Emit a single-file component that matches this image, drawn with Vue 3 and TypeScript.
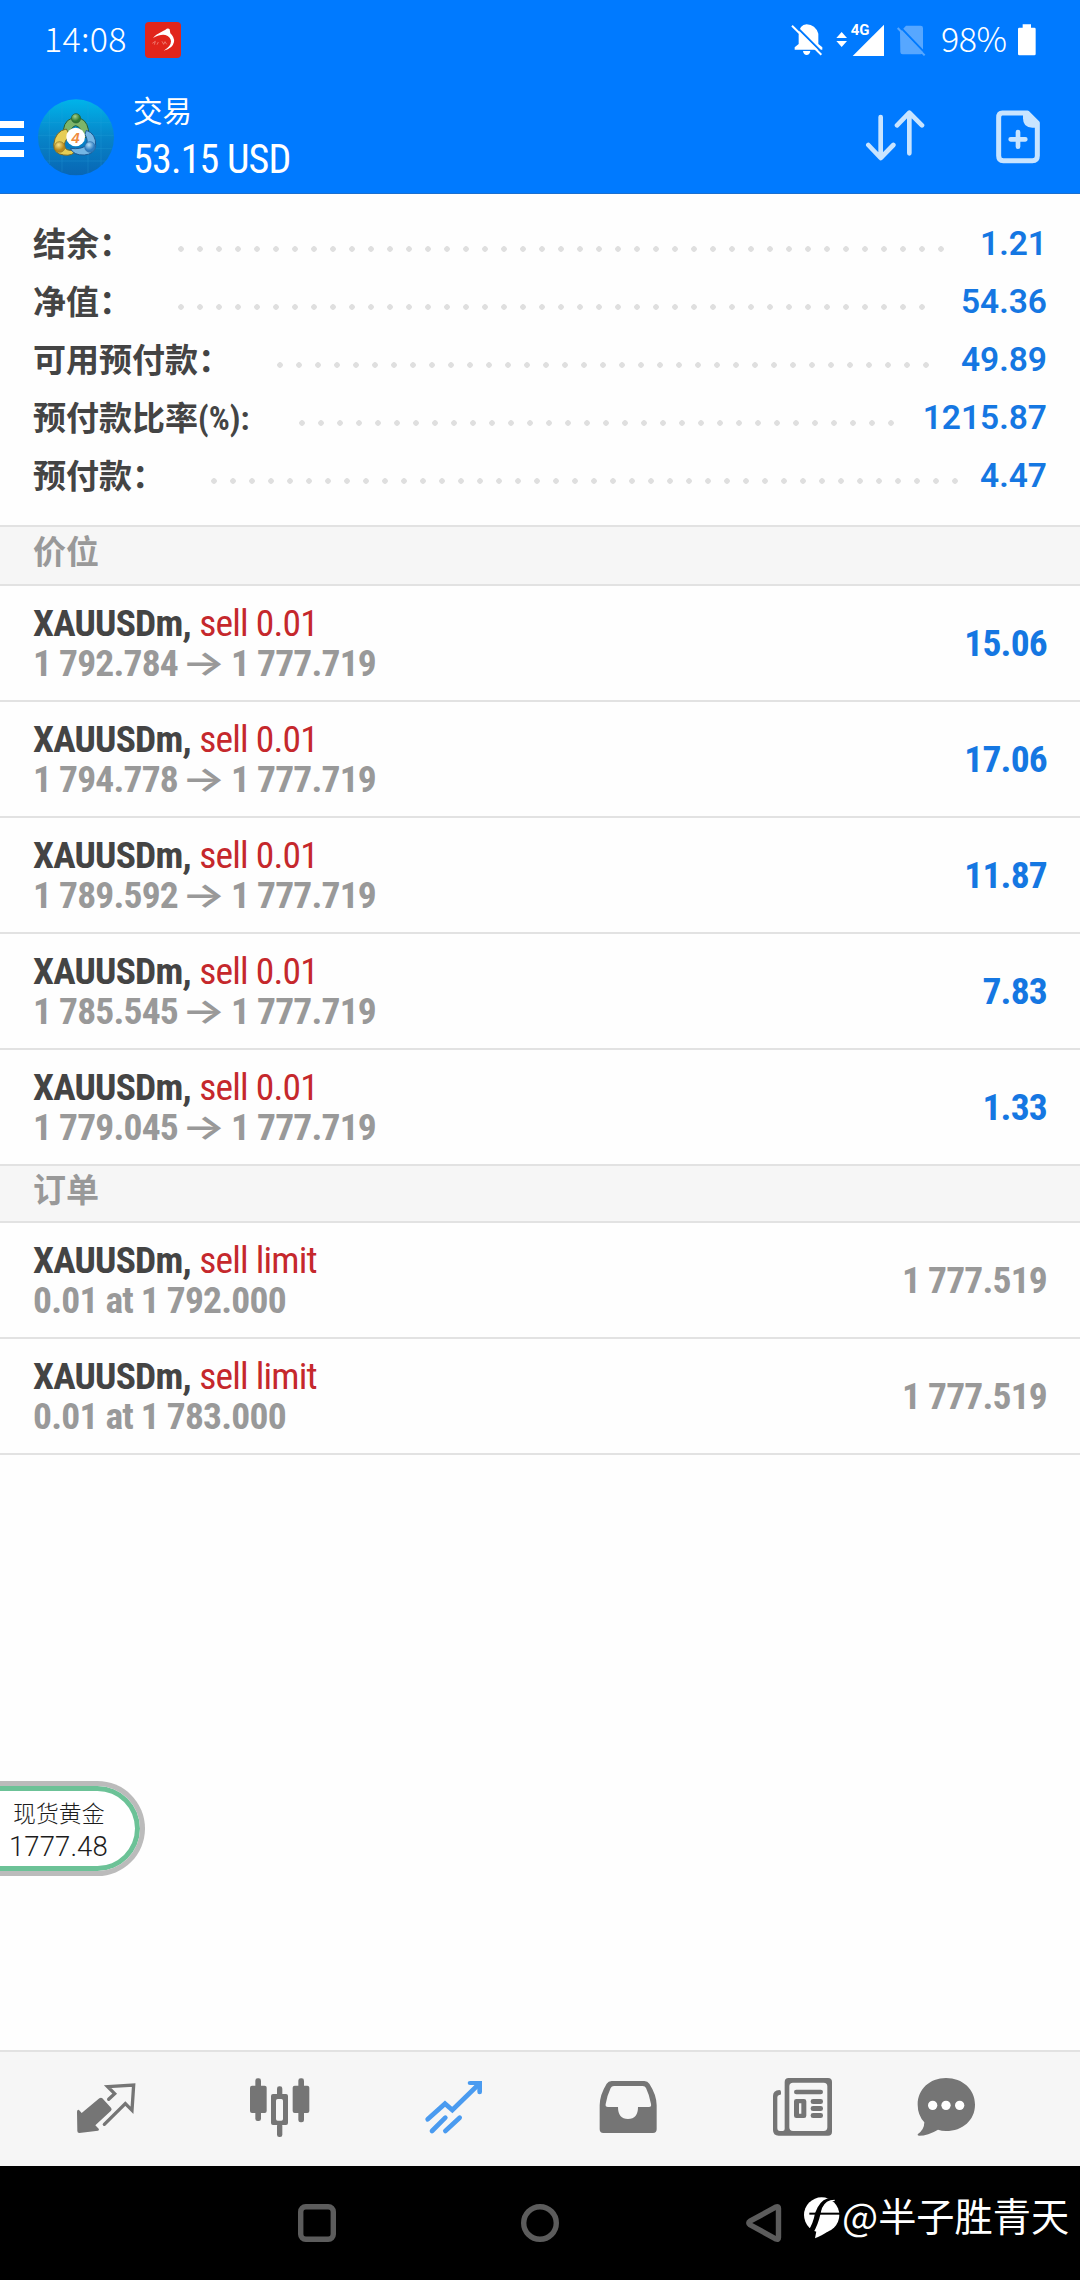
<script setup lang="ts">
interface Summary { label: string; value: string; dots: number; start: number }
interface Position { open: string; now: string; profit: string }
interface Order { detail: string; price: string }

const DOT_PITCH = 19

const summary: Summary[] = [
  { label: '结余：', value: '1.21', dots: 41, start: 178 },
  { label: '净值：', value: '54.36', dots: 40, start: 178 },
  { label: '可用预付款：', value: '49.89', dots: 35, start: 277 },
  { label: '预付款比率(%):', value: '1215.87', dots: 32, start: 299 },
  { label: '预付款：', value: '4.47', dots: 40, start: 211 },
]

const positions: Position[] = [
  { open: '1 792.784', now: '1 777.719', profit: '15.06' },
  { open: '1 794.778', now: '1 777.719', profit: '17.06' },
  { open: '1 789.592', now: '1 777.719', profit: '11.87' },
  { open: '1 785.545', now: '1 777.719', profit: '7.83' },
  { open: '1 779.045', now: '1 777.719', profit: '1.33' },
]

const orders: Order[] = [
  { detail: '0.01 at 1 792.000', price: '1 777.519' },
  { detail: '0.01 at 1 783.000', price: '1 777.519' },
]
</script>

<template>
  <div class="screen">
    <header class="top">
      <div class="status">
        <span class="clock">14:08</span>
        <svg class="notif" width="38" height="38" viewBox="432 63 114 114">
          <rect x="435" y="66" width="108" height="108" rx="12" fill="#e1251b" />
          <path d="M459 114C472 98 488 96 500 86q6-2 9 2l2 12q13 12 11 26-4 20-31 26 22-12 22-28-1-14-17-19-13-4-37 9z" fill="#fff" />
          <path d="M457 130l9-6-3 10M471 134l4-8M486 124l5 9 4-8 5 8" stroke="#f39a90" stroke-width="2" fill="none" />
        </svg>
        <svg class="sys" width="150" height="40" viewBox="90 60 450 120">
          <path d="M104 149v-7l12-10v-28q2-30 24-31 26 1 35 28v31l12 10v7z" fill="#fff" />
          <path d="M129 153h22q-2 12-11 12t-11-12z" fill="#fff" />
          <path d="M101 72l88 88" stroke="#007aff" stroke-width="6" />
          <path d="M96 77l88 87" stroke="#fff" stroke-width="6" />
          <path d="M229 114l16-18 16 18zM229 123h32l-16 18z" fill="#fff" />
          <path d="M372 74v94h-94z" fill="#fff" />
          <text x="272" y="105" class="net">4G</text>
          <path d="M420 97l18-20h44q7 0 7 7v72q0 7-7 7h-54q-7 0-7-7z" fill="#57a7ff" />
          <path d="M419 79l78 82" stroke="#007aff" stroke-width="6" />
          <path d="M413 84l81 82" stroke="#57a7ff" stroke-width="6" />
        </svg>
        <span class="pct">98%</span>
        <svg class="battery" width="18" height="32" viewBox="773 74 54 96">
          <path d="M787 75h25v10h10q4 0 4 4v75q0 4-4 4h-45q-4 0-4-4V89q0-4 4-4h10z" fill="#fff" />
        </svg>
      </div>
      <div class="bar">
        <div class="burger"><i /><i /><i /></div>
        <svg class="logo" width="78" height="78" viewBox="112 293 234 234">
          <defs>
            <linearGradient id="sky" x1="0" y1="0" x2="0" y2="1">
              <stop offset="0" stop-color="#00b4ea" /><stop offset=".5" stop-color="#0784c8" /><stop offset="1" stop-color="#0866b4" />
            </linearGradient>
            <radialGradient id="gr" cx=".4" cy=".3"><stop offset="0" stop-color="#a6d08a" /><stop offset="1" stop-color="#2f7a33" /></radialGradient>
            <radialGradient id="ye" cx=".4" cy=".3"><stop offset="0" stop-color="#f6e58a" /><stop offset="1" stop-color="#b98a1e" /></radialGradient>
            <radialGradient id="bl" cx=".4" cy=".3"><stop offset="0" stop-color="#b4def8" /><stop offset="1" stop-color="#2d7cc0" /></radialGradient>
          </defs>
          <circle cx="229" cy="411" r="114" fill="url(#sky)" />
          <path d="M149 331v160M187 306v208M265 303v215M304 325v172M125 367h208M116 405h226M122 445h214M140 482h178" stroke="#2aa6dc" stroke-width="1.5" opacity=".5" />
          <path d="M190 412q-2-50 26-58h26q26 10 26 54l-20 6q-2-36-20-38-16 2-18 36z" fill="#7db56a" stroke="#245f3a" stroke-width="3" />
          <path d="M200 386q-34 6-38 48 0 26 30 30 28 4 36-14-34 4-34-16 2-18 18-26z" fill="#e6cd55" stroke="#7c6a24" stroke-width="3" />
          <path d="M260 390q30 10 28 46-4 26-34 28-32 2-42-20 32 4 46-8 10-12-2-34z" fill="#74b6e4" stroke="#1d5a94" stroke-width="3" />
          <circle cx="229" cy="354" r="14" fill="url(#gr)" stroke="#265e33" stroke-width="2" />
          <circle cx="180" cy="440" r="16" fill="url(#ye)" stroke="#8a7428" stroke-width="2" />
          <circle cx="271" cy="440" r="16" fill="url(#bl)" stroke="#2a6ca8" stroke-width="2" />
          <circle cx="228" cy="410" r="28" fill="#fff" />
          <text x="228" y="427" text-anchor="middle" class="four">4</text>
        </svg>
        <div class="titles">
          <div class="title">交易</div>
          <div class="balance"><span class="cond">53.15 USD</span></div>
        </div>
        <svg class="act sort" width="60" height="54" viewBox="315 331 180 162">
          <path d="M362 355v122M325 439l37 39 38-39M448 464V343M411 380l37-38 38 38" fill="none" stroke="#c8e4ff" stroke-width="14" stroke-linecap="round" stroke-linejoin="round" />
        </svg>
        <svg class="act" width="46" height="56" viewBox="705 327 138 168">
          <path d="M727 339h75l30 30v98q0 15-15 15h-87q-14 0-14-15V353q0-14 11-14z" fill="none" stroke="#c8e4ff" stroke-width="15" stroke-linejoin="round" />
          <path d="M789 335h14l34 34v14h-20q-28 0-28-28z" fill="#c8e4ff" />
          <path d="M774 396v44M752 418h44" stroke="#c8e4ff" stroke-width="14" stroke-linecap="round" />
        </svg>
      </div>
    </header>

    <section class="summary">
      <div v-for="s in summary" :key="s.label" class="sum">
        <span class="label" :style="{ width: s.start - 33 + 'px' }">{{ s.label }}</span>
        <span class="dots" :style="{ width: s.dots * DOT_PITCH + 'px' }" />
        <span class="val">{{ s.value }}</span>
      </div>
    </section>

    <div class="section first">价位</div>
    <div v-for="p in positions" :key="p.open" class="row">
      <div class="left">
        <div class="line"><b class="cond">XAUUSDm,</b> <span class="cond side">sell 0.01</span></div>
        <div class="line dim"><b class="cond">{{ p.open }}</b><span class="to">→</span><b class="cond">{{ p.now }}</b></div>
      </div>
      <b class="cond profit">{{ p.profit }}</b>
    </div>

    <div class="section second">订单</div>
    <div v-for="o in orders" :key="o.detail" class="row">
      <div class="left">
        <div class="line"><b class="cond">XAUUSDm,</b> <span class="cond side">sell limit</span></div>
        <div class="line dim"><b class="cond">{{ o.detail }}</b></div>
      </div>
      <b class="cond price">{{ o.price }}</b>
    </div>

    <div class="spacer" />

    <nav class="tabs">
      <svg viewBox="99 108 198 198">
        <path d="M178 175q5-4 9 0l26 28q4 5 0 9l-47 44 10 10q3 4-2 6l-56 7q-6 0-6-6l-1-58q1-8 6-5l8 9z" fill="#757575" />
        <path d="M206 178l18-17-21-21 78-5-5 76-20-20-63 62" fill="none" stroke="#757575" stroke-width="10" stroke-linecap="round" />
      </svg>
      <svg viewBox="621 108 198 198" fill="#757575">
        <rect x="630" y="137" width="50" height="82" rx="6" /><rect x="646" y="115" width="17" height="128" rx="7" />
        <rect x="758" y="137" width="50" height="82" rx="6" /><rect x="775" y="115" width="17" height="132" rx="7" />
        <rect x="711" y="139" width="16" height="30" rx="7" /><rect x="711" y="250" width="16" height="41" rx="7" />
        <path fill-rule="evenodd" d="M699 162h39q6 0 6 6v81q0 6-6 6h-39q-6 0-6-6v-81q0-6 6-6zm14 15q-5 0-5 5v55q0 5 5 5h11q5 0 5-5v-55q0-5-5-5z" />
      </svg>
      <svg viewBox="1143 108 198 198" fill="none" stroke="#4a9bf0" stroke-width="14">
        <path d="M1163 238l52-47 22 19 77-75M1176 273l40-40M1216 273l43-40" stroke-linecap="round" />
        <path d="M1290 123h36v33q0 7-7 7t-7-7v-13l-9-8h-13q-7 0-7-6t7-6z" fill="#4a9bf0" stroke="none" />
      </svg>
      <svg viewBox="105 108 198 198" fill="#757575">
        <path fill-rule="evenodd" d="M155 123h98q10 0 15 8 22 34 22 65v72q0 11-11 11H130q-11 0-11-11v-72q0-31 21-65 5-8 15-8zm7 15q-7 0-10 6-10 21-15 48-2 9 7 9h30q0 36 30 36t30-36h33q8 0 6-9-5-28-15-48-3-6-10-6z" />
      </svg>
      <svg viewBox="627 108 198 198" fill="#757575">
        <path fill-rule="evenodd" d="M686 114h118q12 0 12 12v149q0 12-12 12H656q-17 0-17-17V168q0-17 19-18 5 0 5 6v5q0 4-5 4-6 1-6 7v92q0 9 8 9h8q6 0 6-6V126q0-12 12-12zm13 14q-11 0-11 11v123q0 11 11 11h92q11 0 11-11V139q0-11-11-11z" />
        <rect x="702" y="149" width="87" height="14" rx="7" />
        <path fill-rule="evenodd" d="M709 177h23q7 0 7 7v43q0 7-7 7h-23q-7 0-7-7v-43q0-7 7-7zm8 13v31h7v-31z" />
        <rect x="752" y="177" width="37" height="15" rx="7" /><rect x="752" y="198" width="37" height="15" rx="7" /><rect x="752" y="219" width="37" height="15" rx="7" />
      </svg>
      <svg viewBox="1059 108 198 198">
        <path d="M1158 114c50 0 87 34 87 80s-37 79-87 79q-13 0-24-4-30 18-57 18-5 0-4-4 20-14 20-36-20-22-20-53c0-46 36-80 85-80z" fill="#757575" />
        <circle cx="1118" cy="196" r="14" fill="#fff" /><circle cx="1158" cy="196" r="14" fill="#fff" /><circle cx="1199" cy="196" r="14" fill="#fff" />
      </svg>
    </nav>

    <footer class="sysnav">
      <svg width="38" height="38" viewBox="0 0 38 38"><rect x="2.7" y="2.7" width="32.6" height="32.6" rx="5" /></svg>
      <svg width="38" height="38" viewBox="0 0 38 38"><circle cx="19" cy="19" r="16.3" /></svg>
      <svg width="36" height="38" viewBox="0 0 36 38"><path d="M4 17.2L30 3q2.500-1 2.500 1.500v29q0 2.500-2.500 1.500L4 20.800q-2.500-1.800 0-3.600z" /></svg>
    </footer>

    <div class="mark">
      <svg width="36" height="42" viewBox="312 124 108 126">
        <circle cx="365" cy="178" r="53" fill="#fff" />
        <path d="M345 248l8-42 33 20q-24 16-41 22z" fill="#fff" />
        <path d="M422 133q-42-4-55 26l-5 14q-8 36-24 62l-14-8q16-24 21-54l8-18q14-28 43-29z" fill="#000" />
        <path d="M404 134q-26 0-36 24l-4 15" fill="none" stroke="#fff" stroke-width="4" />
        <path d="M328 174h92" stroke="#000" stroke-width="6" />
      </svg>
      <span>@半子胜青天</span>
    </div>

    <div class="float">
      <div class="fname">现货黄金</div>
      <div class="fprice">1777.48</div>
    </div>
  </div>
</template>

<style>
body { background: #fff; }
</style>

<style scoped>
.screen { position: relative; width: 1080px; height: 2280px; overflow: hidden; display: flex; flex-direction: column; background: #fefefe; font-family: Roboto, "Noto Sans CJK SC", sans-serif; }
.top { height: 194px; flex: none; box-sizing: border-box; background: #007aff; border-bottom: 1px solid #1a6fd0; display: flex; flex-direction: column; color: #fff; }
.status { height: 78px; display: flex; align-items: center; padding-left: 44px; }
.clock, .pct { font: 300 34px/40px "Noto Sans CJK SC", sans-serif; margin-bottom: 2px; }
.clock { width: 100px; letter-spacing: .3px; }
.notif { margin-top: 2px; }
.sys { margin-left: 608px; margin-top: 2px; }
.net { font: 700 45px Roboto, sans-serif; fill: #fff; stroke: #007aff; stroke-width: 5px; paint-order: stroke; }
.pct { margin-left: 1px; width: 77px; letter-spacing: -.5px; }
.battery { margin-top: 2px; }
.bar { height: 115px; display: flex; align-items: flex-start; }
.burger { width: 24px; padding-top: 43px; display: flex; flex-direction: column; gap: 8px; }
.burger i { height: 6.500px; background: #fff; }
.logo { margin: 20px 0 0 13px; }
.four { font: italic 700 44px "Liberation Sans", sans-serif; fill: #ef8b3f; }
.titles { margin-left: 18px; width: 732px; padding-top: 10px; }
.title { font: 400 29.500px/42px "Noto Sans CJK SC", sans-serif; }
.balance { font-size: 40px; line-height: 48px; margin-top: 6px; }
.cond { display: inline-block; font-family: "Roboto Condensed", Roboto, sans-serif; font-stretch: 75%; letter-spacing: -.8px; }
.act { margin-top: 31px; }
.sort { margin-right: 70px; }
.summary { height: 331px; flex: none; box-sizing: border-box; padding: 20px 33px 0; }
.sum { height: 58px; display: flex; align-items: center; }
.label { font: 700 33px/58px Roboto, "Noto Sans CJK SC", sans-serif; font-stretch: 80%; color: #444; white-space: nowrap; margin-top: 3px; }
.dots { height: 6px; margin-top: 12px; background: radial-gradient(circle 3px at 3px 3px, #dfdfdf 2.500px, transparent 3.100px) 0 0 / 19px 6px repeat-x; }
.val { margin-left: auto; margin-top: 2px; font-size: 33.500px; line-height: 58px; font-weight: 600; color: #1577e2; }
.section { flex: none; box-sizing: border-box; padding-left: 33px; background: #f6f6f6; border-top: 2px solid #e2e2e2; border-bottom: 2px solid #e2e2e2; color: #999; font: 700 33px/47px "Noto Sans CJK SC", sans-serif; }
.first { height: 61px; }
.second { height: 59px; margin-top: -2px; line-height: 44px; }
.row { height: 116px; flex: none; box-sizing: border-box; border-bottom: 2px solid #e2e2e2; padding: 0 33px; display: flex; align-items: center; justify-content: space-between; font-size: 37.500px; }
.line { height: 40px; line-height: 40px; color: #444; white-space: pre; }
.side { color: #c5282c; margin-left: -1px; }
.dim { color: #999; display: flex; }
.to { font: 600 34px/40px Inter, sans-serif; width: 35px; margin: 0 10px 0 8px; display: flex; justify-content: center; transform: scaleX(1.36); }
.profit { color: #1577e2; }
.price { color: #999; }
.spacer { flex: 1; }
.tabs { height: 116px; flex: none; box-sizing: border-box; border-top: 2px solid #e2e2e2; background: #f6f6f6; padding-left: 19px; display: grid; grid-template-columns: repeat(5, 174px) 114px; align-items: center; justify-items: center; }
.tabs svg { width: 66px; height: 66px; }
.sysnav { height: 114px; flex: none; background: #000; display: flex; align-items: center; padding-left: 298px; gap: 185px; }
.sysnav svg { fill: none; stroke: #5c5c5c; stroke-width: 5.400px; }
.sysnav svg:last-child { margin-left: 2px; }
.mark { position: absolute; left: 804px; top: 2188px; display: flex; align-items: center; color: #fff; font: 400 38.200px/54px "Noto Sans CJK SC", sans-serif; white-space: nowrap; }
.mark svg { margin: 6px 2px 0 0; }
.float { position: absolute; left: -20px; top: 1781px; width: 165px; height: 95px; box-sizing: border-box; border: 5px solid #bbb; border-left: 0; border-radius: 0 48px 48px 0; background: #fff; box-shadow: inset 0 0 0 5px #6cc297; color: #1c1c1c; padding: 9px 0 0 29px; }
.fname { font: 300 22.900px/34px "Noto Sans CJK SC", sans-serif; padding-left: 4px; }
.fprice { font: 300 27.500px/33px Roboto, sans-serif; margin-top: 1px; letter-spacing: .1px; }
</style>
